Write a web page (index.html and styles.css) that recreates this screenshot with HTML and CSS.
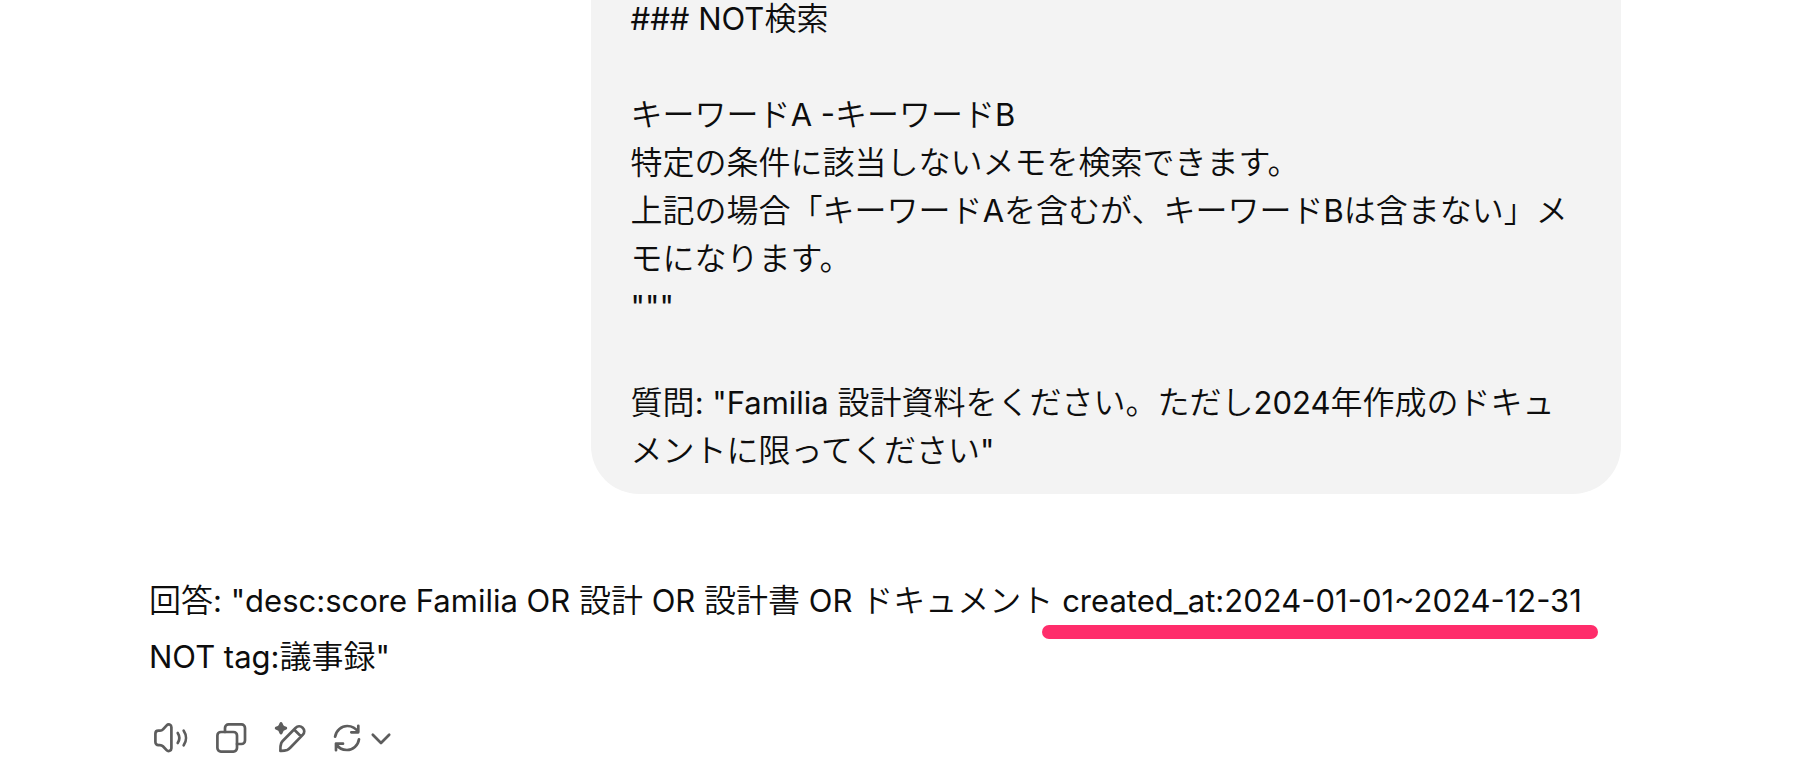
FILE: index.html
```html
<!DOCTYPE html>
<html lang="ja">
<head>
    <meta charset="UTF-8">
    <meta name="viewport" content="width=device-width, initial-scale=1.0">
    <title>Chat</title>
    <link rel="stylesheet" href="styles.css">
</head>
<body>
    <main class="thread">
        <!-- User message -->
        <div class="bubble"><span class="en">### NOT</span>検索

キーワード<span class="en">A -</span>キーワード<span class="en">B</span>
特定の条件に該当しないメモを検索できます。
上記の場合「キーワード<span class="en">A</span>を含むが、キーワード<span class="en">B</span>は含まない」メモになります。
<span class="en">"""</span>

質問<span class="en">: "Familia </span>設計資料をください。ただし<span class="en">2024</span>年作成のドキュメントに限ってください<span class="en">"</span></div>

        <!-- Assistant answer -->
        <p class="answer">回答<span class="en">: "desc:score Familia OR </span>設計<span class="en"> OR </span>設計書<span class="en"> OR </span>ドキュメント <span class="en marked">created_at:2024-01-01~2024-12-31</span><br><span class="en">NOT tag:</span>議事録<span class="en">"</span></p>

        <!-- Actions under the answer -->
        <div class="actions">
            <button type="button" aria-label="読み上げる">
                <svg width="36" height="36" viewBox="0 0 36 36">
                    <path d="M5.4 10.7H7c1.2 0 2.2-.4 3-1.3l3.7-4c1.6-1.8 4.7-1 4.7 1.8v21c0 2.7-3.1 3.7-4.8 1.9l-3.7-3.8c-.8-.8-1.8-1.2-3-1.2H5.4c-1.7 0-3-1.3-3-3v-8.4c0-1.7 1.3-3 3-3z"/>
                    <path d="M24.7 13c2 3 2 7 0 10M30.7 10.7c3 4.4 3 10.2 0 14.6"/>
                </svg>
            </button>
            <button type="button" aria-label="コピーする">
                <svg width="36" height="36" viewBox="0 0 36 36">
                    <rect x="4.4" y="12" width="19.6" height="19.6" rx="3.5"/>
                    <path d="M12 12V8a3.6 3.6 0 0 1 3.6-3.6h12.8A3.6 3.6 0 0 1 32 8v12.4a3.6 3.6 0 0 1-3.6 3.6H24"/>
                </svg>
            </button>
            <button type="button" aria-label="編集する">
                <svg width="36" height="36" viewBox="0 0 36 36">
                    <path class="solid" d="M6.6 2.9c.5-1.2 2.3-1.2 2.8 0l.9 2.1c.2.4.5.7.9.9l2.1.9c1.2.5 1.2 2.3 0 2.8l-2.1.9c-.4.2-.7.5-.9.9l-.9 2.1c-.5 1.2-2.3 1.2-2.8 0l-.9-2.1c-.2-.4-.5-.7-.9-.9l-2.1-.9c-1.2-.5-1.2-2.3 0-2.8l2.1-.9c.4-.2.7-.5.9-.9z"/>
                    <path d="M7.4 30.8c-.2-3.1.1-5.7.8-7.6.4-1 1-1.8 1.7-2.5L22.5 8c2.1-2 5-2.3 7.1-.3 2.2 2.1 2.2 5 .1 7.2L17.2 27.7c-.9.9-1.9 1.7-3.1 2.2-1.9.7-4 1-6.7.9zM21.3 9.8l6.6 6.4"/>
                </svg>
            </button>
            <button type="button" aria-label="再生成する">
                <svg width="32" height="36" viewBox="0 0 32 36">
                    <path d="M2.1 16.7C3.2 10.3 8.5 6 14.2 6c4.6 0 8.8 2.5 11 6.2M25.3 5.8v6.5h-7M26 19.3C25.1 25.5 19.9 30 14 30c-4.6 0-8.8-2.5-11-6.3M10 23.7H3v6.5"/>
                </svg>
                <svg width="24" height="36" viewBox="0 0 24 36">
                    <path d="M3.8 14.7L12 23l8.2-8.3"/>
                </svg>
            </button>
        </div>
    </main>
</body>
</html>
```
FILE: styles.css
```css
* {
    box-sizing: border-box;
}

body {
    margin: 0;
    background: #fff;
    color: #0d0d0d;
    font-family: Inter, "Noto Sans CJK JP", sans-serif;
    font-size: 32px;
    font-weight: 350;
    line-height: 48px;
}

/* Latin text and digits */
.en {
    font-size: 31px;
    font-weight: 400;
    line-height: 1;
}

/* The newest message stays at the bottom, older ones run off the top */
.thread {
    display: flex;
    flex-direction: column;
    justify-content: flex-end;
    height: 100vh;
    padding: 0 185px 26px 149px;
    overflow: hidden;
}

.bubble {
    align-self: flex-end;
    width: 70%;
    padding: 20px 40px 19px;
    border-radius: 0 0 48px 48px;
    background: #f3f3f3;
    white-space: pre-wrap;
    flex-shrink: 0;
}

.answer {
    margin: 79px 0 35px;
    line-height: 56px;
}

/* Pink marker line under the date filter */
.marked {
    position: relative;
}

.marked::after {
    content: '';
    position: absolute;
    left: -20px;
    right: -16px;
    bottom: -20px;
    height: 14px;
    border-radius: 7px;
    background: #ff2d6b;
}

.actions {
    display: flex;
    gap: 24px;
    padding-left: 4px;
}

.actions button {
    display: flex;
    gap: 4px;
    padding: 0;
    border: none;
    background: none;
    color: #5d5d5d;
    cursor: pointer;
}

.actions svg {
    fill: none;
    stroke: currentColor;
    stroke-width: 2.7;
    stroke-linecap: round;
    stroke-linejoin: round;
}

.actions .solid {
    fill: currentColor;
    stroke: none;
}
```
